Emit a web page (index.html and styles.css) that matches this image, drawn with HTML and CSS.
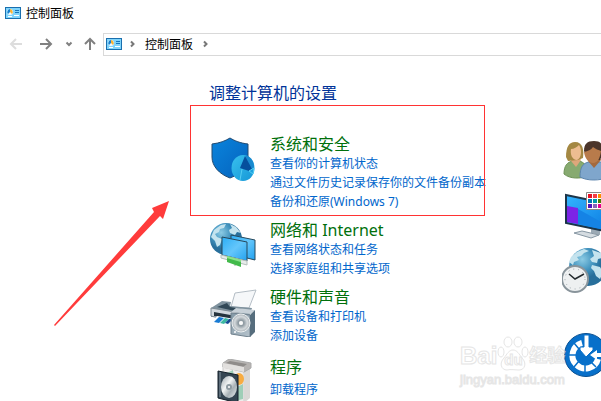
FILE: index.html
```html
<!DOCTYPE html>
<html lang="zh-CN">
<head>
    <meta charset="UTF-8">
    <meta name="viewport" content="width=device-width, initial-scale=1.0">
    <title>控制面板</title>
    <link rel="stylesheet" href="styles.css">
</head>
<body>
    <!-- Shared symbol for the small control panel icon -->
    <svg class="defs" aria-hidden="true">
        <symbol id="panel-icon" viewBox="0 0 16 12">
            <rect width="16" height="12" fill="#1a6fae"/>
            <rect x="1" y="1" width="14" height="10" fill="#7fd4fb"/>
            <circle cx="5" cy="5" r="3" fill="#f3fbff"/>
            <path d="M5 5V2A3 3 0 0 0 3 7z" fill="#1580cf"/>
            <path d="M5 5V2a3 3 0 0 1 2 5z" fill="#f9b233"/>
            <path d="M10 3.500h4M10 5.500h4" stroke="#1675bb"/>
            <path d="M3 9.500h4M9 8.500h5" stroke="#fff"/>
        </symbol>
    </svg>

    <header class="title-bar">
        <svg class="panel-icon"><use href="#panel-icon"/></svg>
        <span>控制面板</span>
    </header>

    <nav class="nav-bar">
        <button class="nav-button back" aria-label="后退" disabled>
            <svg width="14" height="12" viewBox="0 0 14 12"><path d="M13 6H2M7 1L2 6l5 5"/></svg>
        </button>
        <button class="nav-button forward" aria-label="前进">
            <svg width="14" height="12" viewBox="0 0 14 12"><path d="M1 6h11M7 1l5 5-5 5"/></svg>
        </button>
        <button class="nav-button recent" aria-label="最近的位置">
            <svg width="8" height="6" viewBox="0 0 8 6"><path d="M1.500 1.500L4 4l2.500-2.500"/></svg>
        </button>
        <button class="nav-button up" aria-label="向上">
            <svg width="12" height="14" viewBox="0 0 12 14"><path d="M6 13V2M1 7l5-5 5 5"/></svg>
        </button>
        <div class="address">
            <svg class="panel-icon"><use href="#panel-icon"/></svg>
            <svg class="chevron" viewBox="0 0 5 8"><path d="M1 1.500L3.500 4 1 6.500"/></svg>
            <a href="#">控制面板</a>
            <svg class="chevron" viewBox="0 0 5 8"><path d="M1 1.500L3.500 4 1 6.500"/></svg>
        </div>
    </nav>

    <main class="content">
        <h1>调整计算机的设置</h1>
        <div class="columns">
            <div class="categories">
                <section class="category">
                    <svg class="icon" viewBox="0 0 48 48">
                        <defs>
                            <linearGradient id="shield" x2="1" y2="1">
                                <stop offset="0" stop-color="#0a84dc"/>
                                <stop offset="1" stop-color="#0562bd"/>
                            </linearGradient>
                            <linearGradient id="disk" x2="1" y2="1">
                                <stop offset="0" stop-color="#38c0ee"/>
                                <stop offset="1" stop-color="#1596d6"/>
                            </linearGradient>
                        </defs>
                        <path d="M3 8C11 7 16 5 21 2c5 3 10 5 18 6v13c0 9-7 17-18 21C10 38 3 30 3 21z" fill="url(#shield)" stroke="#234a70" stroke-width="1"/>
                        <ellipse cx="34" cy="32" rx="11.500" ry="13" fill="url(#disk)"/>
                        <path d="M35 31l2-12c5 2 8 6 8 13z" fill="#1989cf"/>
                        <path d="M36 20l-5 12 9 3 3-2z" fill="#054f9d"/>
                        <path d="M33 33l-2 11M40 35l5-3-1 6z" fill="#1da0dd" stroke="#55cdf3"/>
                    </svg>
                    <div class="links">
                        <h2><a href="#">系统和安全</a></h2>
                        <a href="#">查看你的计算机状态</a>
                        <a href="#">通过文件历史记录保存你的文件备份副本</a>
                        <a href="#">备份和还原(Windows 7)</a>
                    </div>
                </section>

                <section class="category">
                    <svg class="icon" viewBox="0 0 48 48">
                        <defs>
                            <radialGradient id="globe" cx=".35" cy=".3">
                                <stop offset="0" stop-color="#8ccbe4"/>
                                <stop offset=".6" stop-color="#4394bf"/>
                                <stop offset="1" stop-color="#286f9b"/>
                            </radialGradient>
                            <linearGradient id="screen" x2="1" y2="1">
                                <stop offset="0" stop-color="#2badf5"/>
                                <stop offset=".5" stop-color="#64c6fb"/>
                                <stop offset="1" stop-color="#22a1ef"/>
                            </linearGradient>
                        </defs>
                        <circle cx="17" cy="17" r="16" fill="url(#globe)"/>
                        <path d="M5 8l7-5 5-1-2 4-4 1-1 3-4 2 2 3 5 2-2 6-3 2-2-6-4-4zM21 2l6 3 5 6-4-1-2 3-5-2-1-3 3-2zM24 14l8 1v4l-5-1z" fill="#c4e3ee"/>
                        <path d="M22 13l24 5v20l-24-6z" fill="url(#screen)" stroke="#26485c"/>
                        <path d="M13 15l25 5v19l-25-6z" fill="url(#screen)" stroke="#26485c"/>
                        <path d="M12 36l26 7v-4l-26-6z" fill="#e7ecea" stroke="#b4c0bb"/>
                        <path d="M26 39v5" stroke="#aaa"/>
                        <path d="M18 34l14 4v7l-14-5z" fill="#43ba4b"/>
                        <path d="M18 35l14 4" stroke="#8ce28c" stroke-width="2"/>
                    </svg>
                    <div class="links">
                        <h2><a href="#">网络和 Internet</a></h2>
                        <a href="#">查看网络状态和任务</a>
                        <a href="#">选择家庭组和共享选项</a>
                    </div>
                </section>

                <section class="category">
                    <svg class="icon" viewBox="0 0 48 48">
                        <defs>
                            <linearGradient id="speaker" x2="1" y2="1">
                                <stop offset="0" stop-color="#8297a5"/>
                                <stop offset="1" stop-color="#b6c3cc"/>
                            </linearGradient>
                            <radialGradient id="cone">
                                <stop offset="0" stop-color="#f7f8f8"/>
                                <stop offset=".3" stop-color="#8b979f"/>
                                <stop offset=".7" stop-color="#d4d9dc"/>
                                <stop offset="1" stop-color="#aab2b8"/>
                            </radialGradient>
                        </defs>
                        <path d="M26 4l21-3-7 18-18-1z" fill="#f5f7f9" stroke="#b4bdc5"/>
                        <path d="M2 19l11-7 9 1-1 4 22 2-3 9H2z" fill="#7f929e"/>
                        <path d="M8 18l10-4 3 4 12 2-3 3z" fill="#314857"/>
                        <path d="M2 19l30 5v11L2 27z" fill="#d3d9de" stroke="#7d8a93"/>
                        <path d="M5 23l22 4v4L5 27z" fill="#26343e"/>
                        <path d="M8 27l18 3-6 6-17-3z" fill="#fafcff"/>
                        <path d="M10 28l5 1-5 5-5-1z" fill="#197bd3"/>
                        <path d="M16 29l4 1-5 5-4-1z" fill="#3db9a2"/>
                        <path d="M20 30h4l-5 5-3-1z" fill="#174b94"/>
                        <path d="M22 23l5-4 19 2-4 4z" fill="#c8d1d8"/>
                        <path d="M22 24l19 2v22l-19-3z" fill="url(#speaker)" stroke="#70818e"/>
                        <path d="M41 26l5-5v22l-5 5z" fill="#566d7d"/>
                        <ellipse cx="32" cy="34" rx="9" ry="9" fill="url(#cone)" stroke="#eef1f2"/>
                        <circle cx="32" cy="34" r="2" fill="#f9fafa"/>
                        <circle cx="26" cy="43" r="1" fill="#fff"/>
                    </svg>
                    <div class="links">
                        <h2><a href="#">硬件和声音</a></h2>
                        <a href="#">查看设备和打印机</a>
                        <a href="#">添加设备</a>
                    </div>
                </section>

                <section class="category programs">
                    <svg class="icon" viewBox="0 0 48 48">
                        <defs>
                            <linearGradient id="cd" x2="1" y2="1">
                                <stop offset="0" stop-color="#9da7ad"/>
                                <stop offset=".4" stop-color="#f2f5f5"/>
                                <stop offset=".65" stop-color="#a7b1b6"/>
                                <stop offset="1" stop-color="#eef1f2"/>
                            </linearGradient>
                        </defs>
                        <path d="M14 5l21 5v34l-21-4z" fill="#eeeceb" stroke="#ccc"/>
                        <path d="M35 10l6-3v32l-6 5z" fill="#dad8d6"/>
                        <path d="M14 4l6-4 22 4v5l-7 4-21-5z" fill="#b7b4b2" stroke="#aaa"/>
                        <path d="M17 4l4-2 17 3-4 3z" fill="#8f8c8a"/>
                        <path d="M14 4l21 4v5l-21-4z" fill="#e2e0de"/>
                        <path d="M16 15l8-4 1 8-8 2z" fill="#9fceb7"/>
                        <ellipse cx="30" cy="20" rx="5" ry="6" fill="#f7ac42"/>
                        <path d="M26 29l8-4v15l-8 2z" fill="#9fceb7"/>
                        <path d="M9 12l20 4v28L9 39z" fill="#344552" stroke="#15212b"/>
                        <path d="M11 13v25" stroke="#8697a2"/>
                        <ellipse cx="20" cy="28" rx="8" ry="11" fill="url(#cd)"/>
                        <circle cx="20" cy="28" r="3" fill="#8e9ba2"/>
                        <circle cx="20" cy="28" r="1" fill="#fff"/>
                    </svg>
                    <div class="links">
                        <h2><a href="#">程序</a></h2>
                        <a href="#">卸载程序</a>
                    </div>
                </section>
            </div>

            <div class="more-categories">
                <a href="#" aria-label="用户帐户">
                    <svg class="icon" viewBox="0 0 48 48">
                        <path d="M2 39c0-8 3-12 9-13h6c5 1 9 5 9 15-8 3-18 3-24-2z" fill="#87aa70" stroke="#6c9155"/>
                        <path d="M9 26l5 6 5-7-3-4h-5z" fill="#dea77b"/>
                        <path d="M4 22C4 12 7 7 13 7c8 0 9 8 8 16l-5 2-10 1z" fill="#a48843"/>
                        <path d="M9 14c3 0 6-2 8-4 3 4 3 13-2 15-5 0-7-6-6-11z" fill="#edbd91"/>
                        <path d="M18 42c0-10 3-14 9-15h12c5 2 8 7 8 15-9 4-22 4-29 0z" fill="#7fa6cc" stroke="#5c85ae"/>
                        <path d="M26 26l6 7 7-8-2-4h-8z" fill="#a46a3e"/>
                        <path d="M22 16c0-7 3-10 10-10s10 4 9 12l-3 7H27z" fill="#4b352a"/>
                        <path d="M22 17c4-1 7-2 9-5 2 2 6 3 8 4-1 7-3 12-8 12-4 0-8-4-9-11z" fill="#b87b4b"/>
                    </svg>
                </a>
                <a href="#" aria-label="外观和个性化">
                    <svg class="icon" viewBox="0 0 48 48">
                        <defs>
                            <linearGradient id="monitor" x2="1" y2="1">
                                <stop offset="0" stop-color="#35b5ff"/>
                                <stop offset="1" stop-color="#0879df"/>
                            </linearGradient>
                        </defs>
                        <path d="M29 36v6l9 2v-6z" fill="#9caab5"/>
                        <path d="M12 42l8-2 17 4-8 3z" fill="#d5dce1" stroke="#8797a3"/>
                        <path d="M4 4l44 9v28L4 32z" fill="url(#monitor)" stroke="#1c3448" stroke-width="2"/>
                        <path d="M5 15l11 2v16L5 31z" fill="#7b24e6"/>
                        <path d="M16 18l32 18v4l-32-7z" fill="#1583e5"/>
                        <path d="M24.500 1.500h24v17h-24z" fill="#fff" stroke="#888"/>
                        <path d="M26 3h4v4h-4z" fill="#e81123"/>
                        <path d="M31 3h4v4h-4z" fill="#f43d45"/>
                        <path d="M36 3h4v4h-4z" fill="#ff8c00"/>
                        <path d="M26 8h4v4h-4z" fill="#0078b8"/>
                        <path d="M31 8h4v4h-4z" fill="#0099a8"/>
                        <path d="M36 8h4v4h-4z" fill="#498205"/>
                        <path d="M26 13h4v4h-4z" fill="#4c13bd"/>
                        <path d="M31 13h4v4h-4z" fill="#8764b8"/>
                        <path d="M36 13h4v4h-4z" fill="#e3008c"/>
                    </svg>
                </a>
                <a href="#" aria-label="时钟、语言和区域">
                    <svg class="icon" viewBox="0 0 48 48">
                        <circle cx="26" cy="20" r="19" fill="url(#globe)"/>
                        <path d="M9 10l6-5 7-3 5 2-5 2-3 3-4 1 2 3-5 2-1 3-4-3zM30 3l9 3 5 7-4-2-4 1-1 4-5-1-2-3 4-3zM30 18l8 2 3 5-3 7-4-3-2-5-3-3z" fill="#c4e3ee"/>
                        <circle cx="13" cy="32" r="13" fill="#eef0f1" stroke="#89949b" stroke-width="2"/>
                        <circle cx="13" cy="32" r="10" fill="none" stroke="#9aa3a9" stroke-dasharray="1 4"/>
                        <path d="M7 27l6 5 9-5" fill="none" stroke="#242a2e" stroke-width="1.500"/>
                    </svg>
                </a>
                <a href="#" aria-label="轻松使用" class="ease">
                    <svg class="icon" viewBox="0 0 48 48">
                        <circle cx="24" cy="25" r="21.500" fill="#0870ca" stroke="#084f91"/>
                        <path d="M20 13a13 13 0 1 0 16 16" fill="none" stroke="#fff" stroke-width="6"/>
                        <path d="M12 13l5 6M5 25h9M12 37l5-6M23 43v-9M34 37l-6-6" stroke="#0870ca" stroke-width="1.500"/>
                        <path d="M18 17h4V5h5v12h4v3l-7 7-6-7z" fill="#fff" stroke="#0870ca" stroke-width="1"/>
                        <path d="M28 25l7-5v3h11v4H35v3z" fill="#fff"/>
                    </svg>
                </a>
            </div>
        </div>
    </main>

    <!-- Annotations drawn over the window -->
    <div class="highlight"></div>
    <svg class="pointer" viewBox="0 0 116 126" aria-hidden="true">
        <path d="M0 124L100 11 98 7 115 0 109 18 106 15 1 125z"/>
    </svg>
    <div class="watermark">
        <div class="brand">
            <span>Bai</span>
            <span class="paw">
                <svg viewBox="0 0 32 36" aria-hidden="true">
                    <ellipse cx="4" cy="16" rx="3" ry="5"/>
                    <ellipse cx="11" cy="6" rx="4" ry="5"/>
                    <ellipse cx="21" cy="6" rx="4" ry="5"/>
                    <ellipse cx="28" cy="16" rx="3" ry="5"/>
                    <path d="M16 14c4 0 6 4 9 8 5 5 3 12-3 12-4 0-8-1-12 0-6 0-8-7-3-12 3-4 5-8 9-8z"/>
                </svg>
                <span class="du">du</span>
            </span>
            <span class="experience">经验</span>
        </div>
        <div class="site">jingyan.baidu.com</div>
    </div>
</body>
</html>
```
FILE: styles.css
```css
* {
    box-sizing: border-box;
}

body {
    position: relative;
    min-height: 100vh;
    margin: 0;
    overflow: hidden;
    background-color: #fff;
    color: #000;
    font-family: "Noto Sans", "Noto Sans CJK SC", sans-serif;
    font-size: 12px;
    white-space: nowrap;
}

a {
    color: inherit;
    text-decoration: none;
}

a:hover {
    text-decoration: underline;
}

.defs {
    position: absolute;
    width: 0;
    height: 0;
}

.panel-icon {
    width: 16px;
    height: 12px;
}

/* Title and navigation */
.title-bar {
    display: flex;
    align-items: center;
    gap: 5px;
    height: 26px;
    padding-left: 5px;
}

.nav-bar {
    display: flex;
    align-items: center;
    height: 36px;
    padding-left: 9px;
}

.nav-button {
    display: flex;
    align-items: center;
    justify-content: center;
    height: 22px;
    padding: 0;
    border: none;
    background: none;
}

.nav-button svg {
    fill: none;
    stroke: #808080;
    stroke-width: 2;
}

.back {
    width: 14px;
}

.back svg {
    stroke: #ddd;
}

.forward {
    width: 14px;
    margin-left: 16px;
}

.recent {
    width: 8px;
    margin-left: 12px;
}

.up {
    width: 12px;
    margin: 0 7px 0 11px;
}

.address {
    display: flex;
    flex: 1;
    align-items: center;
    height: 23px;
    padding-left: 2px;
    border: 1px solid #d9d9d9;
    border-right: none;
}

.address a {
    margin: 0 10px;
}

.chevron {
    width: 5px;
    height: 8px;
    fill: none;
    stroke: #777;
    stroke-width: 2;
}

.address .panel-icon {
    margin-right: 8px;
}

/* Category list */
.content {
    padding: 20px 0 0 209px;
}

h1 {
    margin: 0;
    color: #003399;
    font-size: 16px;
    font-weight: normal;
    line-height: 22px;
}

.columns {
    display: flex;
    padding-top: 30px;
}

.categories {
    display: flex;
    flex: 0 0 353px;
    flex-direction: column;
    gap: 9px;
}

.category {
    display: flex;
    align-items: flex-start;
    gap: 13px;
}

.icon {
    display: block;
    flex: none;
    width: 48px;
    height: 48px;
}

.category .icon {
    margin-top: 2px;
}

.links {
    display: flex;
    flex-direction: column;
    align-items: flex-start;
    color: #0066cc;
    line-height: 19px;
}

h2 {
    margin: 0;
    color: #00700b;
    font-size: 16px;
    font-weight: normal;
    line-height: 20px;
}

.programs {
    padding-top: 3px;
}

.programs h2 {
    padding-bottom: 3px;
}

.more-categories {
    display: flex;
    flex-direction: column;
    gap: 8px;
    padding-top: 1px;
}

.ease {
    padding-top: 27px;
}

/* Annotations */
.highlight {
    position: absolute;
    top: 105px;
    left: 190px;
    width: 295px;
    height: 111px;
    border: 1px solid #f33;
}

.pointer {
    position: absolute;
    top: 201px;
    left: 54px;
    width: 116px;
    height: 126px;
    fill: #ff3b3b;
}

.watermark {
    position: absolute;
    top: 336px;
    left: 460px;
    color: #fff;
    font-family: "Liberation Sans", "Noto Sans CJK SC", sans-serif;
    font-weight: bold;
    -webkit-text-stroke: 1px #e0e0e0;
    opacity: 0.8;
    pointer-events: none;
}

.brand {
    display: flex;
    align-items: flex-end;
    height: 36px;
    font-size: 24px;
    line-height: 32px;
}

.paw {
    position: relative;
    width: 32px;
    height: 36px;
}

.paw svg {
    width: 32px;
    height: 36px;
    fill: #fff;
    stroke: #e0e0e0;
}

.du {
    position: absolute;
    top: 12px;
    left: 7px;
    font-size: 15px;
    line-height: 24px;
}

.experience {
    font-size: 18px;
}

.site {
    font-size: 13px;
    font-weight: normal;
    line-height: 16px;
}
```
